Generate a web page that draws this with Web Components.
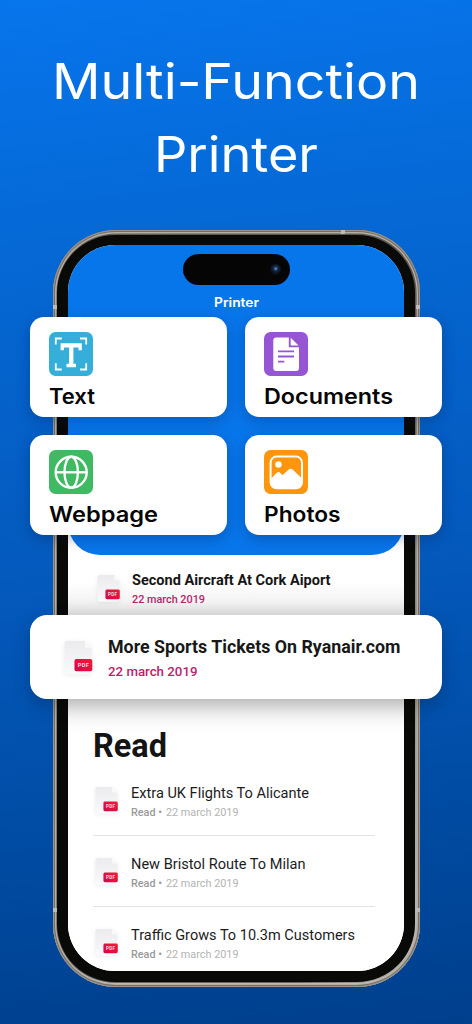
<!DOCTYPE html>
<html lang="en">
<head>
<meta charset="utf-8">
<title>Multi-Function Printer</title>
<style>
    body{
        margin: 0;
        width: 472px;
        height: 1024px;
        overflow: hidden;
        font-family: Roboto, sans-serif;
        background: linear-gradient(174deg, #0775ec 0%, #0569d6 22%, #0459bc 55%, #004ba2 80%, #003f8c 100%);
    }
</style>
</head>
<body>
<printer-page>
    <phone-frame>
        <phone-header heading="Printer">
            <tool-card icon="text" label="Text" width="46"></tool-card>
            <tool-card icon="documents" label="Documents" width="129"></tool-card>
            <tool-card icon="webpage" label="Webpage" width="109"></tool-card>
            <tool-card icon="photos" label="Photos" width="76.5"></tool-card>
        </phone-header>
        <file-row kind="recent" label="Second Aircraft At Cork Aiport" width="198.5" date="22 march 2019"></file-row>
        <file-row kind="popup" label="More Sports Tickets On Ryanair.com" width="292.5" date="22 march 2019"></file-row>
        <read-list heading="Read">
            <file-row kind="read" label="Extra UK Flights To Alicante" width="178" date="22 march 2019"></file-row>
            <file-row kind="read" label="New Bristol Route To Milan" width="174.5" date="22 march 2019"></file-row>
            <file-row kind="read" label="Traffic Grows To 10.3m Customers" width="224" date="22 march 2019"></file-row>
        </read-list>
    </phone-frame>
</printer-page>

<script>
function makeTemplate(html){
    const template = document.createElement('template')
    template.innerHTML = html
    return template
}

// one line of text set to an exact width
class FitText extends HTMLElement{
    constructor(){
        super()
        this.attachShadow({mode: 'open'})
    }
    connectedCallback(){
        const get = (name, or) => this.getAttribute(name) || or
        const width = get('width', '100')
        const height = get('height', '20')
        this.shadowRoot.innerHTML = `
            <style>
                :host{ display: block; width: ${width}px; height: ${height}px; }
                svg{ display: block; overflow: visible; }
                text{
                    font-family: ${get('font', 'Roboto')}, sans-serif;
                    font-size: ${get('size', '14')}px;
                    font-weight: ${get('weight', '400')};
                    fill: currentColor;
                }
            </style>
            <svg width="${width}" height="${height}">
                <text x="0" y="${get('baseline', '15')}" textLength="${width}" lengthAdjust="spacingAndGlyphs"></text>
            </svg>`
        this.shadowRoot.querySelector('text').textContent = get('text', '')
    }
}
window.customElements.define('fit-text', FitText)

const pageTemplate = makeTemplate(`
    <style>
        :host{ display: flex; flex-direction: column; align-items: center; height: 1024px; }
        h1{
            margin: 0;
            padding-top: 43px;
            height: 230px;
            box-sizing: border-box;
            display: flex;
            flex: none;
            flex-direction: column;
            align-items: center;
            color: #fff;
        }
    </style>
    <h1>
        <fit-text text="Multi-Function" font="Inter" size="48.8" width="368" height="73" baseline="55.7"></fit-text>
        <fit-text text="Printer" font="Inter" size="48.8" width="164" height="73" baseline="55.7"></fit-text>
    </h1>
    <slot></slot>
`)

class PrinterPage extends HTMLElement{
    constructor(){
        super()
        this.attachShadow({mode: 'open'})
        this.shadowRoot.appendChild(pageTemplate.content.cloneNode(true))
    }
}
window.customElements.define('printer-page', PrinterPage)

const phoneTemplate = makeTemplate(`
    <style>
        :host{
            display: block;
            flex: none;
            position: relative;
            box-sizing: border-box;
            width: 367px;
            height: 756.5px;
            padding: 4.8px;
            border-radius: 63px;
            background: linear-gradient(100deg, #6a645d 0%, #5c564f 25%, #5c564f 75%, #c8c2b8 100%);
            box-shadow: inset 0 0 0 1px #98938c, inset 0 0 0 2px #756f68, inset 0 0 0 3.4px #b3aea6, inset 0 -4px 1px #d2d2cf;
        }
        .bezel{
            box-sizing: border-box;
            height: 100%;
            padding: 10.6px 11.2px;
            border-radius: 58px;
            background: #090907;
        }
        .screen{
            height: 725.7px;
            border-radius: 47px;
            background: #fff;
        }
        /* antenna lines in the metal band */
        i{ position: absolute; width: 4px; height: 4px; background: #bdbbb8; }
        .a{ left: 288px; top: 0; }
        .b{ left: 0; top: 75px; }
        .c{ right: 0; top: 75px; }
        .d{ left: 0; bottom: 75px; }
        .e{ right: 0; bottom: 75px; }
    </style>
    <i class="a"></i><i class="b"></i><i class="c"></i><i class="d"></i><i class="e"></i>
    <div class="bezel"><div class="screen"><slot></slot></div></div>
`)

class PhoneFrame extends HTMLElement{
    constructor(){
        super()
        this.attachShadow({mode: 'open'})
        this.shadowRoot.appendChild(phoneTemplate.content.cloneNode(true))
    }
}
window.customElements.define('phone-frame', PhoneFrame)

class PhoneHeader extends HTMLElement{
    constructor(){
        super()
        this.attachShadow({mode: 'open'})
    }
    connectedCallback(){
        this.shadowRoot.innerHTML = `
            <style>
                :host{
                    display: flex;
                    flex-direction: column;
                    align-items: center;
                    box-sizing: border-box;
                    height: 309.7px;
                    padding-top: 8.7px;
                    border-radius: 47px 47px 32px 32px;
                    background: #0876eb;
                    color: #fff;
                }
                .island{
                    display: flex;
                    align-items: center;
                    justify-content: flex-end;
                    box-sizing: border-box;
                    width: 107px;
                    height: 30.5px;
                    padding-right: 9px;
                    border-radius: 16px;
                    background: #050505;
                    flex: none;
                }
                .camera{
                    width: 11px;
                    height: 11px;
                    border-radius: 50%;
                    background: radial-gradient(circle at 52% 42%, #5781b5 0 8%, #1d3b66 20%, #101d33 38%, #0a0d13 65%);
                }
                fit-text{ margin-top: 9px; flex: none; }
                .grid{
                    display: grid;
                    grid-template-columns: 196.4px 196.4px;
                    grid-auto-rows: 99.7px;
                    gap: 18.3px;
                    margin-top: 3.6px;
                }
            </style>
            <div class="island"><div class="camera"></div></div>
            <fit-text text="${this.getAttribute('heading')}" font="Inter" size="12.7" weight="600" width="45" height="20" baseline="12.6"></fit-text>
            <div class="grid"><slot></slot></div>`
    }
}
window.customElements.define('phone-header', PhoneHeader)

const icons = {
    text: `
        <rect width="44" height="44" rx="6.5" fill="#35aeda"/>
        <path d="M6.8 12.6V6.5h6M31 6.5h6.2v6.1M6.8 31.3v6.2h6M31 37.5h6.2v-6.2" fill="none" stroke="#fff" stroke-width="1.8"/>
        <path d="M11.6 11.3h21.2v7h-3.3v-2.9h-5.1v16.4h2.5v3.4h-9.4v-3.4h2.6V15.4h-5.2v2.9h-3.3z" fill="#fff"/>`,
    documents: `
        <rect width="44" height="44" rx="6.5" fill="#9656d4"/>
        <path d="M12.3 5.5h12.5v9.8H35V36a3 3 0 0 1-3 3H12.3a3 3 0 0 1-3-3V8.5a3 3 0 0 1 3-3z" fill="#fff"/>
        <path d="M26.7 5.7l7.8 7.9h-7.8z" fill="#fff"/>
        <path d="M14 19.4h16M14 24.5h16M14 29.6h6.3" stroke="#9656d4" stroke-width="1.9"/>`,
    webpage: `
        <rect width="44" height="44" rx="6.5" fill="#3fba63"/>
        <g fill="none" stroke="#fff" stroke-width="2.4">
            <circle cx="22.2" cy="22.3" r="15.5"/>
            <ellipse cx="22.2" cy="22.3" rx="6.7" ry="15.5"/>
            <path d="M6.7 22.3h31"/>
        </g>`,
    photos: `
        <rect width="44" height="44" rx="6.5" fill="#ff950c"/>
        <rect x="6.6" y="6.6" width="31.4" height="31.6" rx="6" fill="none" stroke="#fff" stroke-width="2"/>
        <circle cx="14.5" cy="14.5" r="3.2" fill="#fff"/>
        <path d="M6.600 29l6-6c1.300-1.200 2.500-1.200 3.700 0l2.200 2.200 5.300-5c2.200-1.800 3.600-1.800 5.700 0l8.500 8.300v4a6 6 0 0 1-6 6H12.600a6 6 0 0 1-6-6z" fill="#fff"/>`
}

class ToolCard extends HTMLElement{
    constructor(){
        super()
        this.attachShadow({mode: 'open'})
    }
    connectedCallback(){
        this.shadowRoot.innerHTML = `
            <style>
                :host{
                    display: block;
                    box-sizing: border-box;
                    padding: 14.9px 18.4px 0;
                    border-radius: 14px;
                    background: #fff;
                    box-shadow: 0 4px 14px rgba(0, 20, 60, .28);
                    color: #060606;
                }
                svg{ display: block; }
            </style>
            <svg width="44" height="44" viewBox="0 0 44 44">${icons[this.getAttribute('icon')]}</svg>
            <fit-text text="${this.getAttribute('label')}" font="Inter" size="21.2" weight="600"
                width="${this.getAttribute('width')}" height="36" baseline="28.3"></fit-text>`
    }
}
window.customElements.define('tool-card', ToolCard)

class PdfIcon extends HTMLElement{
    constructor(){
        super()
        this.attachShadow({mode: 'open'})
    }
    connectedCallback(){
        const size = Number(this.getAttribute('size'))
        this.shadowRoot.innerHTML = `
            <style>
                :host{ display: block; width: ${size}px; flex: none; }
                svg{ display: block; overflow: visible; }
                .page{ filter: drop-shadow(0 1.5px 2px rgba(60, 40, 80, .09)); }
                text{ font: 700 4.6px Roboto, sans-serif; fill: #ffd9e0; }
            </style>
            <svg width="${size}" height="${size * 28 / 23}" viewBox="0 0 23 28">
                <defs>
                    <linearGradient id="page" x1="0" y1="0" x2="0" y2="1">
                        <stop offset="0" stop-color="#ebebee"/>
                        <stop offset="1" stop-color="#fafafc"/>
                    </linearGradient>
                    <linearGradient id="badge" x1="0" y1="1" x2="1" y2="0">
                        <stop offset="0" stop-color="#d5064a"/>
                        <stop offset="1" stop-color="#f41b35"/>
                    </linearGradient>
                </defs>
                <path class="page" d="M2.5 0H17l5.5 5.5V25a2 2 0 0 1-2 2h-18a2 2 0 0 1-2-2V2a2 2 0 0 1 2-2z" fill="url(#page)"/>
                <path d="M17 0l5.5 5.5h-4A1.5 1.5 0 0 1 17 4z" fill="#f9f9fb"/>
                <rect x="8.5" y="14.7" width="14.5" height="9.8" rx="1.5" fill="url(#badge)"/>
                <text x="11.2" y="21.2" textLength="9">PDF</text>
            </svg>`
    }
}
window.customElements.define('pdf-icon', PdfIcon)

// sizes of the three kinds of file row
const kinds = {
    recent: {
        host: 'height: 60px; padding: 0 0 0 28.5px; background: linear-gradient(#fff 45%, #f4f4f4 75%, #dedede);',
        icon: 22.8, iconTop: 19.8, gap: 12.4,
        title: {size: 14.6, weight: 700, height: 34, baseline: 29.8, color: '#161616'},
        date: {size: 11.3, weight: 500, height: 20, baseline: 14.2, width: 73, color: '#b82369'}
    },
    popup: {
        host: 'height: 84.3px; margin: 0 -38px; padding: 0 0 0 33.7px; border-radius: 17px; background: #fff; box-shadow: 0 7px 18px rgba(0, 0, 0, .21); position: relative;',
        icon: 28.3, iconTop: 26, gap: 15.6,
        title: {size: 18, weight: 700, height: 45, baseline: 38.4, color: '#181818'},
        date: {size: 13.6, weight: 500, height: 25, baseline: 15.8, width: 89.5, color: '#b82369'}
    },
    read: {
        host: 'height: 70.8px; padding: 0 0 0 2px; border-bottom: 1px solid #e3e3e3;',
        icon: 22.8, iconTop: 22, gap: 12.8,
        title: {size: 15.2, weight: 400, height: 38, baseline: 32.6, color: '#1c1c1c'},
        date: {size: 11.1, weight: 400, height: 20, baseline: 12.5, width: 72.5, color: '#b3b3b3'}
    }
}

class FileRow extends HTMLElement{
    constructor(){
        super()
        this.attachShadow({mode: 'open'})
    }
    connectedCallback(){
        const kind = this.getAttribute('kind')
        const k = kinds[kind]
        const line = (text, t, width) => `<fit-text text="${text}" size="${t.size}" weight="${t.weight}"
            width="${width}" height="${t.height}" baseline="${t.baseline}" style="color: ${t.color}"></fit-text>`
        const read = kind === 'read'
            ? `<fit-text text="Read •" size="11.1" weight="500" width="31" height="20" baseline="12.5" style="color: #999"></fit-text>`
            : ''
        this.shadowRoot.innerHTML = `
            <style>
                :host{
                    display: flex;
                    align-items: flex-start;
                    box-sizing: border-box;
                    gap: ${k.gap}px;
                    ${k.host}
                }
                :host(:last-child){ border-bottom: 0; }
                pdf-icon{ margin-top: ${k.iconTop}px; }
                .meta{ display: flex; gap: 4px; }
            </style>
            <pdf-icon size="${k.icon}"></pdf-icon>
            <div>
                ${line(this.getAttribute('label'), k.title, this.getAttribute('width'))}
                <div class="meta">${read}${line(this.getAttribute('date'), k.date, k.date.width)}</div>
            </div>`
    }
}
window.customElements.define('file-row', FileRow)

class ReadList extends HTMLElement{
    constructor(){
        super()
        this.attachShadow({mode: 'open'})
    }
    connectedCallback(){
        this.shadowRoot.innerHTML = `
            <style>
                :host{
                    display: block;
                    padding: 0 28.5px 0 25px;
                    background: linear-gradient(#e6e6e6, #f4f4f4 14px, #fff 34px);
                    border-radius: 0 0 47px 47px;
                    height: 271.7px;
                    box-sizing: border-box;
                    color: #141414;
                }
            </style>
            <fit-text text="${this.getAttribute('heading')}" size="32.5" weight="700" width="74" height="65.8" baseline="58"></fit-text>
            <slot></slot>`
    }
}
window.customElements.define('read-list', ReadList)
</script>
</body>
</html>
